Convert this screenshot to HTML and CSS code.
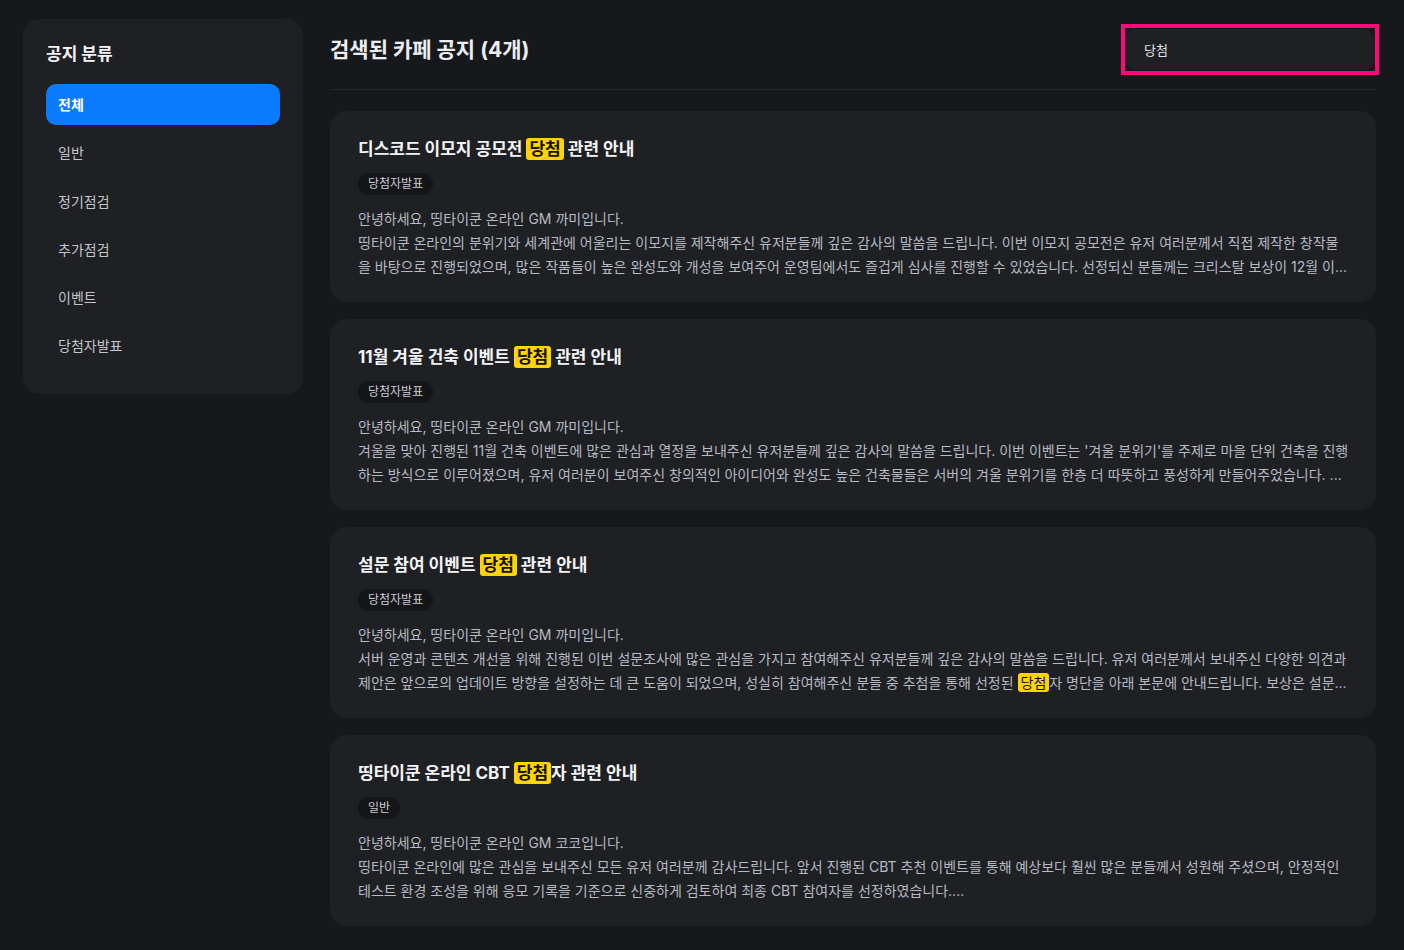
FILE: index.html
```html
<!DOCTYPE html>
<html lang="ko">
  <head>
    <meta charset="UTF-8" />
    <meta name="viewport" content="width=device-width, initial-scale=1.0" />
    <title>카페 공지</title>
    <link rel="stylesheet" href="styles.css">
  </head>
  <body>
    <div class="layout">
      <aside class="sidebar">
        <h2>공지 분류</h2>
        <ul class="cats">
          <li class="active">전체</li>
          <li>일반</li>
          <li>정기점검</li>
          <li>추가점검</li>
          <li>이벤트</li>
          <li>당첨자발표</li>
        </ul>
      </aside>

      <main class="main">
        <div class="header">
          <h1>검색된 카페 공지 (4개)</h1>
          <div class="search-box">
            <input class="search" type="text" value="당첨" />
          </div>
        </div>

        <div class="list">
          <div class="card">
            <h3>디스코드 이모지 공모전 <mark>당첨</mark> 관련 안내</h3>
            <span class="tag">당첨자발표</span>
            <p>안녕하세요, 띵타이쿤 온라인 GM 까미입니다.<br>띵타이쿤 온라인의 분위기와 세계관에 어울리는 이모지를 제작해주신 유저분들께 깊은 감사의 말씀을 드립니다. 이번 이모지 공모전은 유저 여러분께서 직접 제작한 창작물을 바탕으로 진행되었으며, 많은 작품들이 높은 완성도와 개성을 보여주어 운영팀에서도 즐겁게 심사를 진행할 수 있었습니다. 선정되신 분들께는 크리스탈 보상이 12월 이...</p>
          </div>

          <div class="card">
            <h3>11월 겨울 건축 이벤트 <mark>당첨</mark> 관련 안내</h3>
            <span class="tag">당첨자발표</span>
            <p>안녕하세요, 띵타이쿤 온라인 GM 까미입니다.<br>겨울을 맞아 진행된 11월 건축 이벤트에 많은 관심과 열정을 보내주신 유저분들께 깊은 감사의 말씀을 드립니다. 이번 이벤트는 '겨울 분위기'를 주제로 마을 단위 건축을 진행하는 방식으로 이루어졌으며, 유저 여러분이 보여주신 창의적인 아이디어와 완성도 높은 건축물들은 서버의 겨울 분위기를 한층 더 따뜻하고 풍성하게 만들어주었습니다. ...</p>
          </div>

          <div class="card">
            <h3>설문 참여 이벤트 <mark>당첨</mark> 관련 안내</h3>
            <span class="tag">당첨자발표</span>
            <p>안녕하세요, 띵타이쿤 온라인 GM 까미입니다.<br>서버 운영과 콘텐츠 개선을 위해 진행된 이번 설문조사에 많은 관심을 가지고 참여해주신 유저분들께 깊은 감사의 말씀을 드립니다. 유저 여러분께서 보내주신 다양한 의견과 제안은 앞으로의 업데이트 방향을 설정하는 데 큰 도움이 되었으며, 성실히 참여해주신 분들 중 추첨을 통해 선정된 <mark>당첨</mark>자 명단을 아래 본문에 안내드립니다. 보상은 설문...</p>
          </div>

          <div class="card">
            <h3>띵타이쿤 온라인 CBT <mark>당첨</mark>자 관련 안내</h3>
            <span class="tag">일반</span>
            <p>안녕하세요, 띵타이쿤 온라인 GM 코코입니다.<br>띵타이쿤 온라인에 많은 관심을 보내주신 모든 유저 여러분께 감사드립니다. 앞서 진행된 CBT 추천 이벤트를 통해 예상보다 훨씬 많은 분들께서 성원해 주셨으며, 안정적인 테스트 환경 조성을 위해 응모 기록을 기준으로 신중하게 검토하여 최종 CBT 참여자를 선정하였습니다....</p>
          </div>
        </div>
      </main>
    </div>
  </body>
</html>
```

FILE: styles.css
```css
* {
  box-sizing: border-box;
}
body {
  margin: 0;
  background: #17181c;
  color: #e8e9ec;
  font-family: Inter, "Noto Sans CJK KR", sans-serif;
}
.layout {
  display: flex;
  align-items: flex-start;
  gap: 27px;
  padding: 19px 28px 24px 23px;
}
.sidebar {
  width: 280px;
  flex-shrink: 0;
  background: #1f2024;
  border-radius: 16px;
  padding: 23px 23px 28px;
}
.sidebar h2 {
  margin: 0 0 18px;
  font-size: 17px;
  line-height: 24px;
  font-weight: 700;
  color: #f2f3f5;
}
.cats {
  list-style: none;
  margin: 0;
  padding: 0;
  display: flex;
  flex-direction: column;
  gap: 7.3px;
}
.cats li {
  height: 41px;
  line-height: 41px;
  padding-left: 12px;
  border-radius: 10px;
  font-size: 14px;
  color: #c2c5cc;
}
.cats li.active {
  background: #0a7bff;
  color: #fff;
  font-weight: 700;
}
.main {
  flex: 1;
  min-width: 0;
}
.header {
  display: flex;
  align-items: center;
  justify-content: space-between;
  padding: 5px 0 14px 0;
  border-bottom: 1px solid #26272c;
}
.header h1 {
  margin: 0;
  padding-bottom: 4px;
  font-size: 21px;
  font-weight: 700;
  color: #eceef1;
}
.search-box {
  border: 4px solid #ff0a78;
  padding: 1px;
  margin-right: -3px;
}
.search {
  display: block;
  width: 248px;
  height: 41px;
  border: none;
  border-radius: 10px;
  background: #1f2024;
  color: #e2e4e8;
  font-family: inherit;
  font-size: 13px;
  padding: 0 18px;
  outline: none;
}
.list {
  display: flex;
  flex-direction: column;
  gap: 17px;
  margin-top: 21px;
}
.card {
  background: #1f2024;
  border-radius: 16px;
  padding: 25px 25px 23px 28px;
}
.card h3 {
  margin: 0 0 10px;
  font-size: 17px;
  line-height: 26px;
  font-weight: 700;
  color: #f3f4f6;
}
mark {
  background: #ffd400;
  color: #111;
  border-radius: 3px;
  padding: 1px 3px;
}
.tag {
  display: inline-block;
  height: 22px;
  line-height: 22px;
  padding: 0 10px;
  border-radius: 11px;
  background: #141518;
  color: #c9ccd2;
  font-size: 12px;
}
.card p {
  margin: 12px 0 0;
  font-size: 14px;
  line-height: 24px;
  color: #b6bac2;
  display: -webkit-box;
  -webkit-line-clamp: 3;
  -webkit-box-orient: vertical;
  overflow: hidden;
}
```
